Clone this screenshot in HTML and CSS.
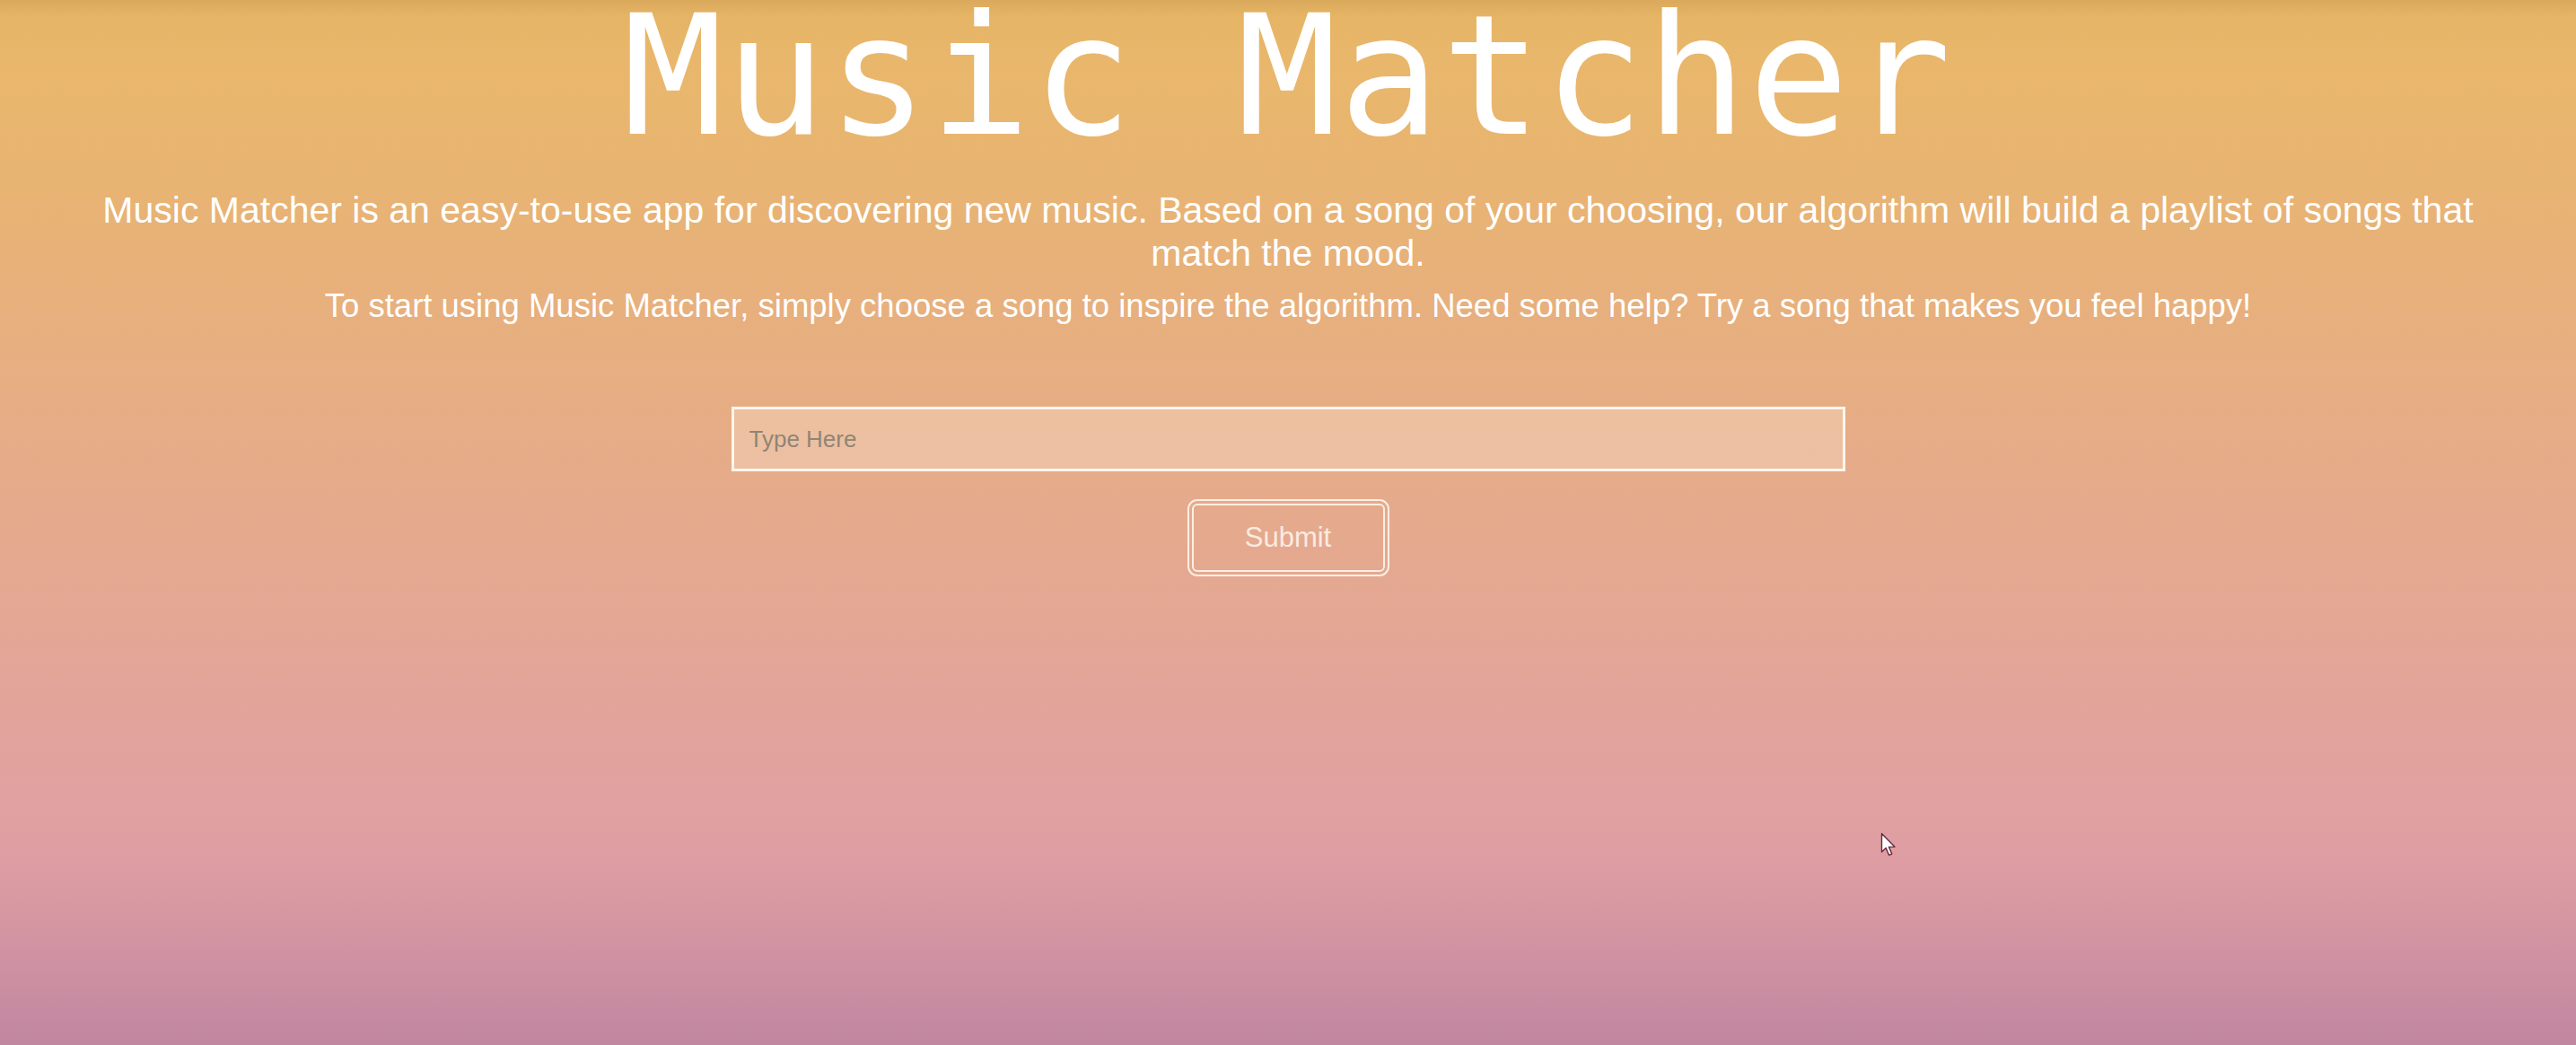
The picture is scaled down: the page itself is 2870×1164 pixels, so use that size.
FILE: index.html
```html
<!DOCTYPE html>
<html lang="en">
<head>
<meta charset="utf-8">
<title>Music Matcher</title>
<link rel="stylesheet" href="styles.css">
</head>
<body>
<main class="page">
  <h1 class="title">Music Matcher</h1>
  <p class="intro">Music Matcher is an easy-to-use app for discovering new music. Based on a song of your choosing, our algorithm will build a playlist of songs that match the mood.</p>
  <p class="hint">To start using Music Matcher, simply choose a song to inspire the algorithm. Need some help? Try a song that makes you feel happy!</p>
  <form class="search" onsubmit="return false;">
    <input class="search-input" type="text" placeholder="Type Here">
    <button class="submit" type="submit">Submit</button>
  </form>
</main>
<svg class="cursor" width="20" height="30" viewBox="0 0 20 30" aria-hidden="true">
  <path d="M1.5 1.5 L1.5 22 L6.2 17.6 L9.6 25.5 L12.8 24.1 L9.5 16.4 L16 16.2 Z" fill="#ffffff" stroke="#6a2c3c" stroke-width="1.4" stroke-linejoin="round"/>
</svg>
</body>
</html>
```
FILE: styles.css
```css
html, body {
  margin: 0;
  padding: 0;
}

body {
  min-height: 1164px;
  background: linear-gradient(to bottom,
    #dba95b 0px,
    #e6b465 18px,
    #e9b76b 60px,
    #e8b472 200px,
    #e7b07c 330px,
    #e6ad86 470px,
    #e5a98e 600px,
    #e3a696 720px,
    #e1a29e 840px,
    #e0a0a2 920px,
    #d999a2 1000px,
    #cd90a2 1080px,
    #c187a0 1164px);
  font-family: "Liberation Sans", Arial, sans-serif;
  color: #ffffff;
  overflow: hidden;
}

.page {
  display: flex;
  flex-direction: column;
  align-items: center;
  text-align: center;
  padding: 0 85px;
}

.title {
  margin: 0;
  padding-top: 3px;
  font-family: "DejaVu Sans Mono", monospace;
  font-weight: normal;
  font-size: 186px;
  line-height: 163px;
  color: #ffffff;
  white-space: nowrap;
  letter-spacing: 2px;
}

.intro {
  margin: 44px 0 0;
  font-size: 41px;
  line-height: 48px;
}

.hint {
  margin: 14px 0 0;
  font-size: 36.5px;
  line-height: 41px;
}

.search {
  margin-top: 92px;
  display: flex;
  flex-direction: column;
  align-items: center;
  gap: 31px;
}

.search-input {
  box-sizing: border-box;
  width: 1241px;
  height: 72px;
  margin: 0;
  padding: 0 17px;
  border: 3px solid #fff6ec;
  border-radius: 0;
  background: rgba(255, 240, 230, 0.28);
  font-family: "Liberation Sans", Arial, sans-serif;
  font-size: 26px;
  color: #5a5048;
  outline: none;
}

.search-input::placeholder {
  color: #8f8575;
  opacity: 1;
}

.submit {
  box-sizing: border-box;
  width: 225px;
  height: 86px;
  margin: 0;
  padding: 0;
  border: 7px double #fbeee2;
  border-radius: 11px;
  background: transparent;
  font-family: "Liberation Sans", Arial, sans-serif;
  font-size: 31px;
  color: #f9ebe0;
  cursor: pointer;
}

.cursor {
  position: absolute;
  left: 2095px;
  top: 927px;
}
```
